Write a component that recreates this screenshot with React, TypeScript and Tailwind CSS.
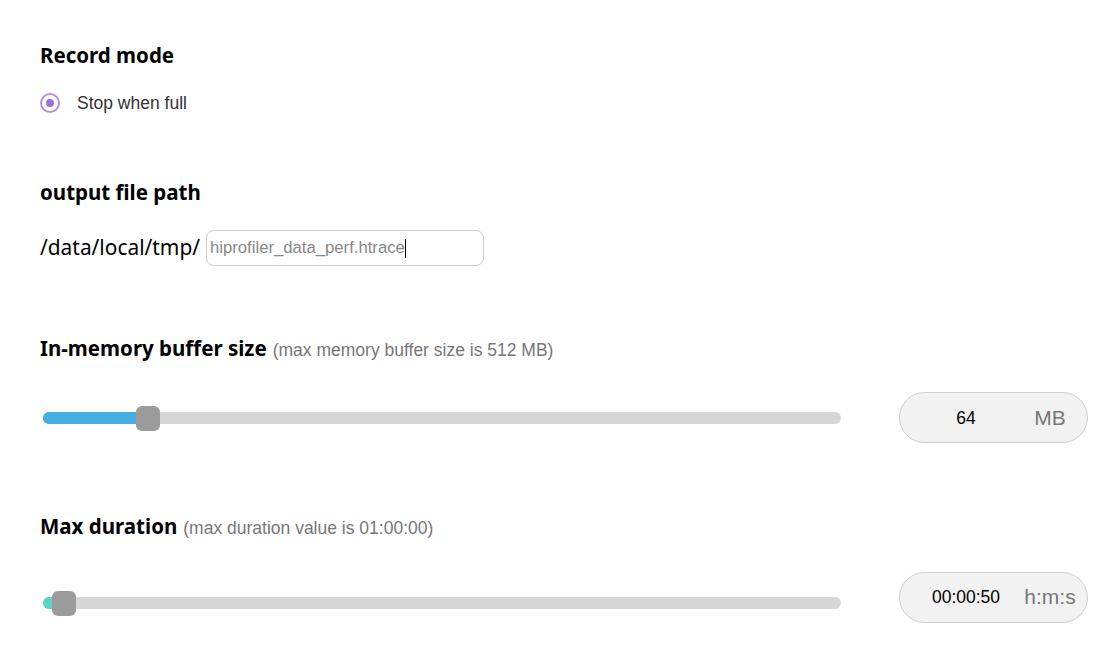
import React from "react";

const heading = "font-['Noto_Sans',sans-serif] font-bold text-[20.5px] leading-[28px] text-black";
const arial = "font-['Liberation_Sans',Arial,sans-serif]";

function Slider({ fill, thumbLeft, color, extra }: { fill: number; thumbLeft: number; color: string; extra: string }) {
  return (
    <div className={`relative ml-[3px] h-[12px] w-[798px] rounded-[6px] bg-[#d6d6d6] ${extra}`}>
      <div className={`absolute left-0 top-0 h-[12px] rounded-l-[6px] ${color}`} style={{ width: fill }} />
      <div
        className="absolute top-[-6px] h-[25px] w-[24px] rounded-[6px] bg-[#9b9b9b]"
        style={{ left: thumbLeft }}
      />
    </div>
  );
}

function ValueBox({ value, unit }: { value: string; unit: string }) {
  return (
    <div className={`flex h-[51px] w-[189px] items-center rounded-full border border-[#cfcfcf] bg-[#f2f2f2] ${arial}`}>
      <div className="flex w-[132px] justify-center text-[17.5px] text-black">{value}</div>
      <div className="flex w-[36px] justify-center whitespace-nowrap text-[21px] text-[#777]">{unit}</div>
    </div>
  );
}

export default function App() {
  return (
    <div className="min-h-[660px] w-[1114px] bg-white pl-[40px] pt-[41px]">
      <div className={heading}>Record mode</div>
      <div className="mt-[24px] flex h-[20px] items-center">
        <div className="flex h-[20px] w-[20px] items-center justify-center rounded-full border-2 border-[#b58ee9]">
          <div className="h-[8px] w-[8px] rounded-full bg-[#9d6fe0]" />
        </div>
        <span className={`ml-[17px] text-[17.5px] text-[#333] ${arial}`}>Stop when full</span>
      </div>

      <div className={`mt-[65px] ${heading}`}>output file path</div>
      <div className="mt-[24px] flex items-center">
        <span className="font-['Noto_Sans',sans-serif] text-[20.9px] text-black">/data/local/tmp/</span>
        <div className={`ml-[6px] flex h-[36px] w-[278px] items-center rounded-[8px] border border-[#cccccc] pl-[3px] text-[16.7px] text-[#888] ${arial}`}>
          <span>hiprofiler_data_perf.htrace</span>
          <span className="h-[19px] w-px bg-black" />
        </div>
      </div>

      <div className="mt-[68px] flex items-baseline">
        <span className={heading}>In-memory buffer size</span>
        <span className={`ml-[6px] text-[17.5px] text-[#777] ${arial}`}>(max memory buffer size is 512 MB)</span>
      </div>
      <div className="mt-[29px] flex items-start">
        <Slider fill={104} thumbLeft={93} color="bg-[#46ade0]" extra="mt-[20px]" />
        <div className="ml-[58px]">
          <ValueBox value="64" unit="MB" />
        </div>
      </div>

      <div className="mt-[69px] flex items-baseline">
        <span className={heading}>Max duration</span>
        <span className={`ml-[6px] text-[17.5px] text-[#777] ${arial}`}>(max duration value is 01:00:00)</span>
      </div>
      <div className="mt-[30px] flex items-start">
        <Slider fill={12} thumbLeft={9} color="bg-[#5fd3bf]" extra="mt-[25px]" />
        <div className="ml-[58px]">
          <ValueBox value="00:00:50" unit="h:m:s" />
        </div>
      </div>
    </div>
  );
}
